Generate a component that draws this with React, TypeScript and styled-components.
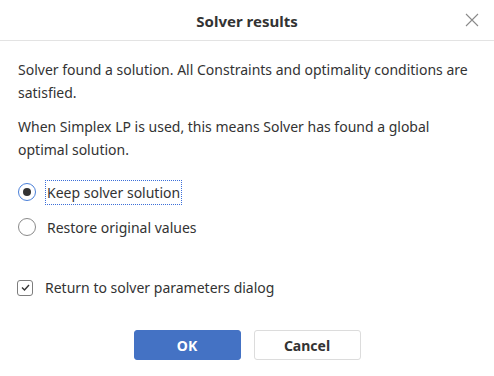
import React from "react";
import styled, { createGlobalStyle } from "styled-components";

const Global = createGlobalStyle`
  html, body { margin: 0; padding: 0; background: #fff; }
  body { font-family: "Noto Sans", "Open Sans", Arial, sans-serif; color: #333; }
`;

const Dialog = styled.div`
  width: 494px;
  height: 376px;
  background: #fff;
  display: flex;
  flex-direction: column;
  box-sizing: border-box;
`;

const Header = styled.div`
  height: 40px;
  border-bottom: 1px solid #e3e3e3;
  display: flex;
  align-items: center;
  justify-content: center;
  position: relative;
  flex-shrink: 0;
`;

const Title = styled.div`
  font-size: 15px;
  font-weight: 700;
  color: #333;
  margin-top: 2px;
`;

const Close = styled.button`
  position: absolute;
  right: 14px;
  top: 12px;
  width: 16px;
  height: 16px;
  border: 0;
  padding: 0;
  background: none;
  display: flex;
`;

const Body = styled.div`
  padding: 17px 18px 0 18px;
  display: flex;
  flex-direction: column;
`;

const Para = styled.p<{ $mb: number }>`
  margin: 0 0 ${(p) => p.$mb}px 0;
  font-size: 14px;
  line-height: 23px;
  color: #333;
`;

const Options = styled.div`
  display: flex;
  flex-direction: column;
  gap: 11px;
  margin-top: 19px;
`;

const Option = styled.label`
  display: flex;
  align-items: center;
  gap: 10px;
  height: 24px;
  font-size: 14px;
  color: #333;
`;

const RadioCircle = styled.span<{ $on?: boolean }>`
  width: 18px;
  height: 18px;
  border-radius: 50%;
  box-sizing: border-box;
  border: 1.5px solid ${(p) => (p.$on ? "#4a7fd8" : "#8a8a8a")};
  display: flex;
  align-items: center;
  justify-content: center;
  &::after {
    content: "";
    display: ${(p) => (p.$on ? "block" : "none")};
    width: 8px;
    height: 8px;
    border-radius: 50%;
    background: #333;
  }
`;

const Label = styled.span<{ $focus?: boolean }>`
  padding: 2px 1px;
  outline: ${(p) => (p.$focus ? "1px dotted #3b6fd9" : "none")};
  line-height: 19px;
`;

const CheckRow = styled.label`
  display: flex;
  align-items: center;
  gap: 12px;
  margin-top: 39px;
  font-size: 14px;
  color: #333;
`;

const CheckBox = styled.span`
  width: 16px;
  height: 16px;
  margin-left: -1px;
  box-sizing: border-box;
  border: 1px solid #7d7d7d;
  border-radius: 3px;
  display: flex;
  align-items: center;
  justify-content: center;
`;

const Footer = styled.div`
  display: flex;
  justify-content: center;
  gap: 13px;
  margin-top: 33px;
`;

const Button = styled.button<{ $primary?: boolean }>`
  width: 107px;
  height: 30px;
  border-radius: 3px;
  font-family: "Noto Sans", "Open Sans", Arial, sans-serif;
  font-size: 14px;
  font-weight: 700;
  box-sizing: border-box;
  border: 1px solid ${(p) => (p.$primary ? "#4472c4" : "#dcdcdc")};
  background: ${(p) => (p.$primary ? "#4472c4" : "#fff")};
  color: ${(p) => (p.$primary ? "#fff" : "#333")};
`;

export default function App() {
  return (
    <>
      <Global />
      <Dialog>
        <Header>
          <Title>Solver results</Title>
          <Close aria-label="Close">
            <svg width="16" height="16" viewBox="0 0 16 16">
              <path d="M2 2 L14 14 M14 2 L2 14" stroke="#8a8a8a" strokeWidth="1.1" fill="none" />
            </svg>
          </Close>
        </Header>
        <Body>
          <Para $mb={11}>
            Solver found a solution. All Constraints and optimality conditions are satisfied.
          </Para>
          <Para $mb={0}>
            When Simplex LP is used, this means Solver has found a global optimal solution.
          </Para>
          <Options>
            <Option>
              <RadioCircle $on />
              <Label $focus>Keep solver solution</Label>
            </Option>
            <Option>
              <RadioCircle />
              <Label>Restore original values</Label>
            </Option>
          </Options>
          <CheckRow>
            <CheckBox>
              <svg width="11" height="11" viewBox="0 0 11 11">
                <path d="M2 5.5 L4.5 8 L9 3" stroke="#333" strokeWidth="1.4" fill="none" />
              </svg>
            </CheckBox>
            Return to solver parameters dialog
          </CheckRow>
          <Footer>
            <Button $primary>OK</Button>
            <Button>Cancel</Button>
          </Footer>
        </Body>
      </Dialog>
    </>
  );
}
